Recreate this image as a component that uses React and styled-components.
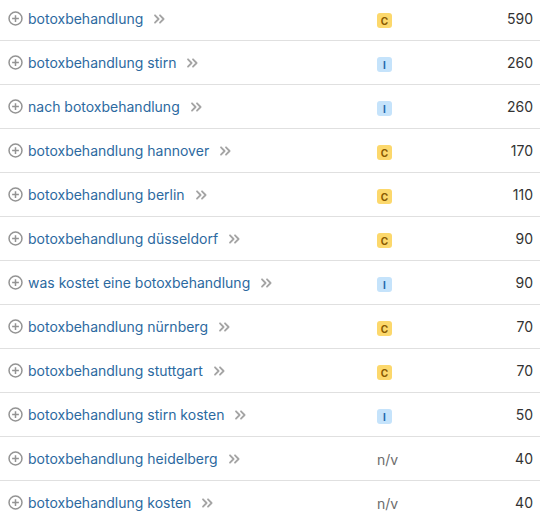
import React from "react";
import styled, { createGlobalStyle } from "styled-components";

const Global = createGlobalStyle`
  html, body { margin: 0; padding: 0; background: #fff; }
  body { font-family: Inter, "Noto Sans", sans-serif; overflow: hidden; }
`;

const List = styled.div`
  width: 540px;
  margin-top: -3px;
`;

const Row = styled.div`
  display: grid;
  grid-template-columns: 377px 1fr auto;
  align-items: center;
  height: 43px;
  border-bottom: 1px solid #e0e0e0;
  padding-right: 7px;
`;

const KeywordCell = styled.div`
  display: flex;
  align-items: center;
  padding-left: 8px;
  gap: 5px;
  min-width: 0;
`;

const Keyword = styled.span`
  font-size: 14px;
  color: #2c69a0;
  white-space: nowrap;
`;

const Chevrons = styled.span`
  display: inline-flex;
  margin-left: 5px;
  color: #a4a4a4;
`;

const Badge = styled.span`
  display: inline-flex;
  align-items: center;
  justify-content: center;
  width: 15px;
  height: 15px;
  border-radius: 3px;
  font-size: 10px;
  font-weight: 700;
  font-family: Inter, sans-serif;
  background: ${(p) => (p.$type === "C" ? "#fcd86c" : "#c5e3fb")};
  color: ${(p) => (p.$type === "C" ? "#8a5a00" : "#1a67ad")};
`;

const NA = styled.span`
  font-size: 14px;
  color: #6c6c6c;
`;

const Volume = styled.span`
  font-size: 14px;
  color: #333;
  text-align: right;
`;

const PlusIcon = () => (
  <svg width="15" height="15" viewBox="0 0 16 16" fill="none" stroke="#949494" strokeWidth="1.6">
    <circle cx="8" cy="8" r="6.9" />
    <path d="M8 4.4v7.2M4.4 8h7.2" />
  </svg>
);

const ChevronIcon = () => (
  <svg width="13" height="12" viewBox="0 0 13 12" fill="none" stroke="currentColor" strokeWidth="1.8" strokeLinecap="round" strokeLinejoin="round">
    <path d="M2 2.3l3.6 3.7L2 9.7" />
    <path d="M7 2.3l3.6 3.7L7 9.7" />
  </svg>
);

const rows = [
  ["botoxbehandlung", "C", 590],
  ["botoxbehandlung stirn", "I", 260],
  ["nach botoxbehandlung", "I", 260],
  ["botoxbehandlung hannover", "C", 170],
  ["botoxbehandlung berlin", "C", 110],
  ["botoxbehandlung düsseldorf", "C", 90],
  ["was kostet eine botoxbehandlung", "I", 90],
  ["botoxbehandlung nürnberg", "C", 70],
  ["botoxbehandlung stuttgart", "C", 70],
  ["botoxbehandlung stirn kosten", "I", 50],
  ["botoxbehandlung heidelberg", null, 40],
  ["botoxbehandlung kosten", null, 40],
];

export default function App() {
  return (
    <>
      <Global />
      <List>
        {rows.map(([kw, intent, vol]) => (
          <Row key={kw}>
            <KeywordCell>
              <PlusIcon />
              <Keyword>{kw}</Keyword>
              <Chevrons>
                <ChevronIcon />
              </Chevrons>
            </KeywordCell>
            <div>{intent ? <Badge $type={intent}>{intent}</Badge> : <NA>n/v</NA>}</div>
            <Volume>{vol}</Volume>
          </Row>
        ))}
      </List>
    </>
  );
}
